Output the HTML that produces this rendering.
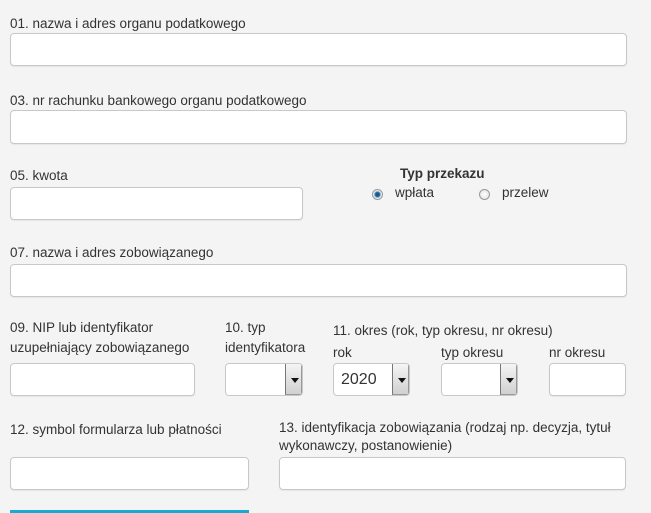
<!DOCTYPE html>
<html><head><meta charset="utf-8"><style>
*{margin:0;padding:0;box-sizing:border-box}
body{width:651px;height:513px;background:#f4f4f4;font-family:"Liberation Sans",sans-serif;color:#333;position:relative;overflow:hidden;font-size:13.5px}
.l{position:absolute;line-height:20px;white-space:nowrap}
.i{position:absolute;background:#fff;border:1px solid #c8c8c8;border-radius:4px;box-shadow:0 1px 1px rgba(0,0,0,.06)}
.s{position:absolute;background:#fff;border:1px solid #c8c8c8;border-radius:4px;overflow:hidden}
.s .b{position:absolute;right:0;top:0;bottom:0;width:17px;background:linear-gradient(#f5f5f5,#d0d0d0);border-left:1px solid #777;border-right:1px solid #999;border-bottom:1px solid #999}
.s .b:after{content:"";position:absolute;left:5px;top:14px;border-left:4px solid transparent;border-right:4px solid transparent;border-top:5px solid #111}
.r{position:absolute;width:11px;height:11px;border-radius:50%;border:1px solid #999;background:radial-gradient(#fff,#ddd)}
</style></head><body>
<div class="l" style="left:10px;top:14px">01. nazwa i adres organu podatkowego</div>
<div class="i" style="left:10px;top:33px;width:617px;height:33px"></div>
<div class="l" style="left:10px;top:91px">03. nr rachunku bankowego organu podatkowego</div>
<div class="i" style="left:10px;top:110px;width:617px;height:34px"></div>
<div class="l" style="left:10px;top:166px">05. kwota</div>
<div class="i" style="left:10px;top:187px;width:293px;height:33px"></div>
<div class="l" style="left:400px;top:164px;font-weight:bold">Typ przekazu</div>
<div class="r" style="left:372px;top:189px;background:radial-gradient(#1a5a8a 30%,#6fa8d8 45%,#eee 60%)"></div>
<div class="l" style="left:395px;top:183px">wpłata</div>
<div class="r" style="left:479px;top:189px"></div>
<div class="l" style="left:502px;top:183px">przelew</div>
<div class="l" style="left:10px;top:243px">07. nazwa i adres zobowiązanego</div>
<div class="i" style="left:10px;top:264px;width:617px;height:33px"></div>
<div class="l" style="left:10px;top:318px">09. NIP lub identyfikator</div>
<div class="l" style="left:10px;top:338px">uzupełniający zobowiązanego</div>
<div class="i" style="left:10px;top:363px;width:185px;height:33px"></div>
<div class="l" style="left:225px;top:318px">10. typ</div>
<div class="l" style="left:225px;top:338px">identyfikatora</div>
<div class="s" style="left:225px;top:363px;width:78px;height:33px"><div class="b"></div></div>
<div class="l" style="left:333px;top:321px">11. okres (rok, typ okresu, nr okresu)</div>
<div class="l" style="left:333px;top:343px">rok</div>
<div class="s" style="left:333px;top:363px;width:77px;height:33px"><span style="position:absolute;left:7px;top:7px;font-size:16px">2020</span><div class="b"></div></div>
<div class="l" style="left:441px;top:343px">typ okresu</div>
<div class="s" style="left:441px;top:363px;width:77px;height:33px"><div class="b"></div></div>
<div class="l" style="left:549px;top:343px">nr okresu</div>
<div class="i" style="left:549px;top:363px;width:77px;height:33px"></div>
<div class="l" style="left:10px;top:420px">12. symbol formularza lub płatności</div>
<div class="i" style="left:10px;top:457px;width:239px;height:33px"></div>
<div class="l" style="left:279px;top:418px">13. identyfikacja zobowiązania (rodzaj np. decyzja, tytuł</div>
<div class="l" style="left:279px;top:436px">wykonawczy, postanowienie)</div>
<div class="i" style="left:279px;top:457px;width:347px;height:33px"></div>
<div style="position:absolute;left:10px;top:510px;width:239px;height:3px;background:#1aa9d0"></div>
</body></html>
